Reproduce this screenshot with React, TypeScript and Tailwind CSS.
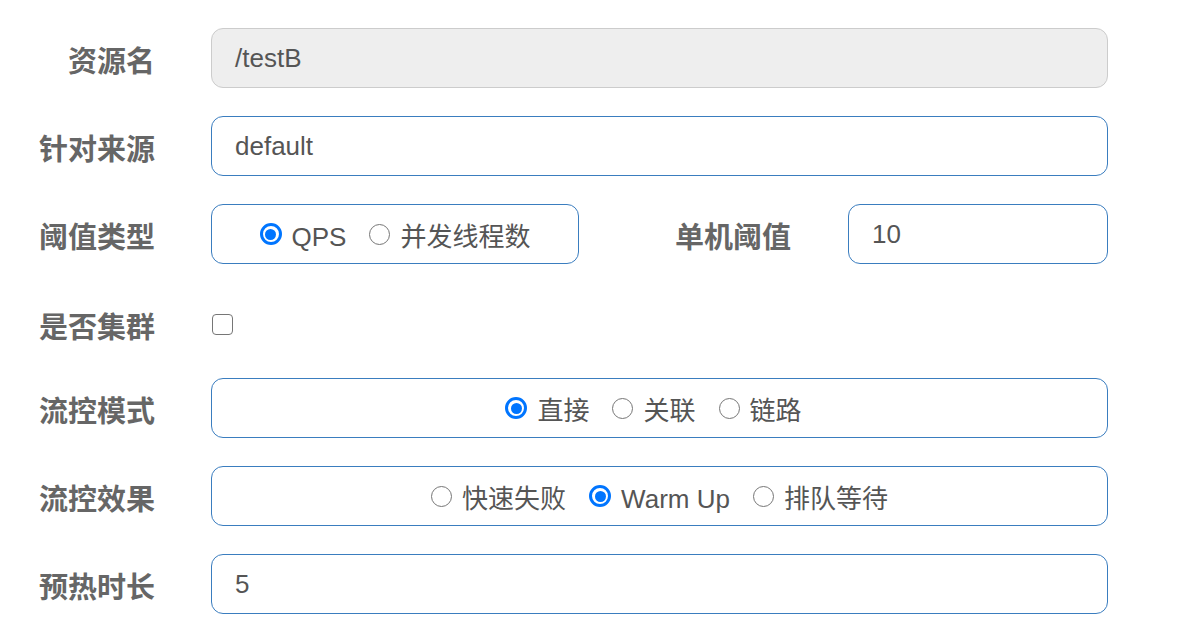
const Label = ({ text }: { text: string }) => (
  <div className="w-[211px] shrink-0 translate-y-[4px] pr-[56px] text-right text-[29px] font-bold leading-none text-[#666]">
    {text}
  </div>
);

const Radio = ({ checked, label, className = "" }: { checked?: boolean; label: string; className?: string }) => (
  <label className={`flex items-center ${className}`}>
    {checked ? (
      <span className="flex h-[22px] w-[22px] items-center justify-center rounded-full border-[3px] border-[#0075ff] bg-white">
        <span className="h-[11px] w-[11px] rounded-full bg-[#0075ff]" />
      </span>
    ) : (
      <span className="h-[21px] w-[21px] rounded-full border-[1.5px] border-[#767676] bg-white" />
    )}
    <span className="ml-[10px] translate-y-[3px]">{label}</span>
  </label>
);

const boxCls =
  "h-[60px] rounded-[12px] border border-[#3a7dbf] bg-white text-[26px] text-[#555] flex items-center";

export default function App() {
  return (
    <div
      className="min-h-screen bg-white pt-[28px] pr-[80px]"
      style={{ fontFamily: '"Liberation Sans", Arial, "Noto Sans CJK SC", sans-serif' }}
    >
      <div className="flex flex-col gap-[28px]">
        <div className="flex items-center">
          <Label text="资源名" />
          <div className="flex h-[60px] flex-1 items-center rounded-[12px] border border-[#ccc] bg-[#eee] px-[23px] text-[26px] text-[#555]">
            /testB
          </div>
        </div>

        <div className="flex items-center">
          <Label text="针对来源" />
          <div className={`${boxCls} flex-1 px-[23px]`}>default</div>
        </div>

        <div className="flex items-center">
          <Label text="阈值类型" />
          <div className={`${boxCls} w-[368px] justify-center`}>
            <Radio checked label="QPS" className="mr-[23px]" />
            <Radio label="并发线程数" />
          </div>
          <div className="w-[269px] shrink-0 translate-y-[4px] pr-[57px] text-right text-[29px] font-bold leading-none text-[#666]">
            单机阈值
          </div>
          <div className={`${boxCls} flex-1 px-[23px]`}>10</div>
        </div>

        <div className="flex h-[58px] items-center pt-[6px]">
          <Label text="是否集群" />
          <span className="ml-[1px] h-[21px] w-[21px] rounded-[4px] border-[1.5px] border-[#767676] bg-white" />
        </div>

        <div className="flex items-center">
          <Label text="流控模式" />
          <div className={`${boxCls} flex-1 justify-center pr-[12px]`}>
            <Radio checked label="直接" className="mr-[23px]" />
            <Radio label="关联" className="mr-[23px]" />
            <Radio label="链路" />
          </div>
        </div>

        <div className="flex items-center">
          <Label text="流控效果" />
          <div className={`${boxCls} flex-1 justify-center`}>
            <Radio label="快速失败" className="mr-[23px]" />
            <Radio checked label="Warm Up" className="mr-[23px]" />
            <Radio label="排队等待" />
          </div>
        </div>

        <div className="flex items-center">
          <Label text="预热时长" />
          <div className={`${boxCls} flex-1 px-[23px]`}>5</div>
        </div>
      </div>
    </div>
  );
}
